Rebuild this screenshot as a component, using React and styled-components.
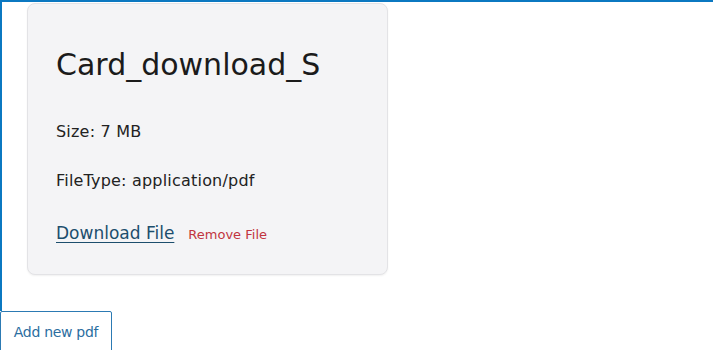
import React from 'react';
import styled, { createGlobalStyle } from 'styled-components';

const GlobalStyle = createGlobalStyle`
  html, body {
    margin: 0;
    padding: 0;
    background: #fff;
    font-family: 'DejaVu Sans', 'Noto Sans', sans-serif;
  }
`;

const Frame = styled.section`
  border-top: 2px solid #0b78c1;
  border-left: 2px solid #0b78c1;
  padding: 1px 0 36px 25px;
`;

const Card = styled.article`
  width: 361px;
  box-sizing: border-box;
  background: #f4f4f6;
  border: 1px solid #e3e3e6;
  border-radius: 8px;
  box-shadow: 0 1px 2px rgba(0, 0, 0, 0.06);
  padding: 44px 28px 29px;
  display: flex;
  flex-direction: column;
`;

const Title = styled.h1`
  margin: 0 0 38px;
  font-size: 30px;
  line-height: 34px;
  font-weight: 400;
  color: #1b1b1b;
`;

const Info = styled.p`
  margin: 0 0 ${(p) => p.$gap}px;
  font-size: 16px;
  line-height: 24px;
  color: #222;
  letter-spacing: 0.2px;
`;

const Actions = styled.div`
  display: flex;
  align-items: baseline;
  gap: 14px;
`;

const DownloadLink = styled.a`
  font-size: 17px;
  line-height: 24px;
  color: #1c4e6d;
  text-decoration: underline;
  text-underline-offset: 3px;
  cursor: pointer;
`;

const RemoveButton = styled.button`
  border: none;
  background: none;
  padding: 0;
  font-family: inherit;
  font-size: 13px;
  color: #c1353f;
  cursor: pointer;
`;

const AddButton = styled.button`
  display: block;
  box-sizing: border-box;
  width: 112px;
  height: 44px;
  border: 1px solid #2c7ab3;
  border-radius: 2px;
  background: #fff;
  padding: 0 0 2px;
  font-family: inherit;
  font-size: 14px;
  letter-spacing: -0.3px;
  color: #2b6e9f;
  cursor: pointer;
`;

export default function App() {
  return (
    <>
      <GlobalStyle />
      <Frame>
        <Card>
          <Title>Card_download_S</Title>
          <Info $gap={25}>Size: 7 MB</Info>
          <Info $gap={28}>FileType: application/pdf</Info>
          <Actions>
            <DownloadLink>Download File</DownloadLink>
            <RemoveButton>Remove File</RemoveButton>
          </Actions>
        </Card>
      </Frame>
      <AddButton>Add new pdf</AddButton>
    </>
  );
}
